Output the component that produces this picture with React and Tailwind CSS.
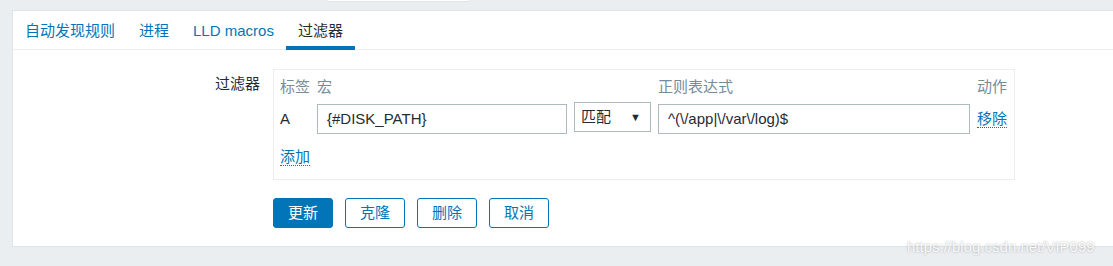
import React from "react";

const FONT = { fontFamily: '"Liberation Sans", Arial, "Noto Sans CJK SC", sans-serif' };

const tabs = ["自动发现规则", "进程", "LLD macros", "过滤器"];

const App = () => {
  return (
    <div
      className="relative h-[266px] w-[1113px] overflow-hidden bg-[#ebeef0] pl-[12px] pt-[10px] text-[15px] text-[#1f2c33]"
      style={FONT}
    >
      {/* header bit poking in at the top */}
      <div className="absolute left-[325px] top-[-10px] h-[12px] w-[146px] rounded-b-[3px] border border-[#dfe4e7] bg-white"></div>

      <div className="h-[237px] border-b border-l border-t border-[#dfe4e7] bg-white">
        {/* Tabs */}
        <div className="flex h-[39px] border-b border-[#ebeef0]">
          {tabs.map((t, i) => (
            <div
              key={t}
              className={
                i === 3
                  ? "flex h-[39px] items-center border-b-4 border-[#0275b8] px-[12px] pt-[6px] text-[#1f2c33]"
                  : "flex h-[39px] items-center border-b-4 border-transparent px-[12px] pt-[6px] text-[#0275b8]"
              }
            >
              {t}
            </div>
          ))}
        </div>

        {/* Form */}
        <div className="flex pt-[19px]">
          <div className="w-[247px] pt-[6px] text-right leading-[18px]">过滤器</div>
          <div className="ml-[13px]">
            <div className="w-[742px] border border-[#ebeef0] pb-[13px] pl-[6px] pr-[7px] pt-[8px]">
              <div className="grid grid-cols-[30px_250px_77px_312px_auto] items-center gap-x-[7px] leading-[18px]">
                <div className="text-[#768d99]">标签</div>
                <div className="text-[#768d99]">宏</div>
                <div></div>
                <div className="text-[#768d99]">正则表达式</div>
                <div className="text-right text-[#768d99]">动作</div>

                <div className="mt-[8px]">A</div>
                <div className="mt-[8px] flex h-[30px] items-center border border-[#acbbc2] px-[9px]">
                  {"{#DISK_PATH}"}
                </div>
                <div className="mt-[6px] mb-[2px] flex h-[30px] items-center justify-between border border-[#acbbc2] pl-[6px] pr-[9px]">
                  <span>匹配</span>
                  <span className="text-[11px]">▼</span>
                </div>
                <div className="mt-[8px] flex h-[30px] items-center border border-[#acbbc2] px-[9px]">
                  {"^(\\/app|\\/var\\/log)$"}
                </div>
                <div className="mt-[8px]">
                  <span className="border-b border-dotted border-[#0275b8] text-[#0275b8]">移除</span>
                </div>
              </div>
              <div className="mt-[14px] leading-[18px]">
                <span className="border-b border-dotted border-[#0275b8] text-[#0275b8]">添加</span>
              </div>
            </div>

            {/* Buttons */}
            <div className="mt-[18px] flex gap-[12px]">
              <button className="h-[30px] w-[60px] rounded-[3px] border border-[#0275b8] bg-[#0275b8] text-white">
                更新
              </button>
              <button className="h-[30px] w-[60px] rounded-[3px] border border-[#0275b8] bg-white text-[#0275b8]">
                克隆
              </button>
              <button className="h-[30px] w-[60px] rounded-[3px] border border-[#0275b8] bg-white text-[#0275b8]">
                删除
              </button>
              <button className="h-[30px] w-[60px] rounded-[3px] border border-[#0275b8] bg-white text-[#0275b8]">
                取消
              </button>
            </div>
          </div>
        </div>
      </div>

      {/* watermark */}
      <div className="absolute left-[907px] top-[236px] text-[15px] text-white/90 [text-shadow:0_0_2px_rgba(0,0,0,0.35)]">
        https://blog.csdn.net/VIP099
      </div>
    </div>
  );
};

export default App;
